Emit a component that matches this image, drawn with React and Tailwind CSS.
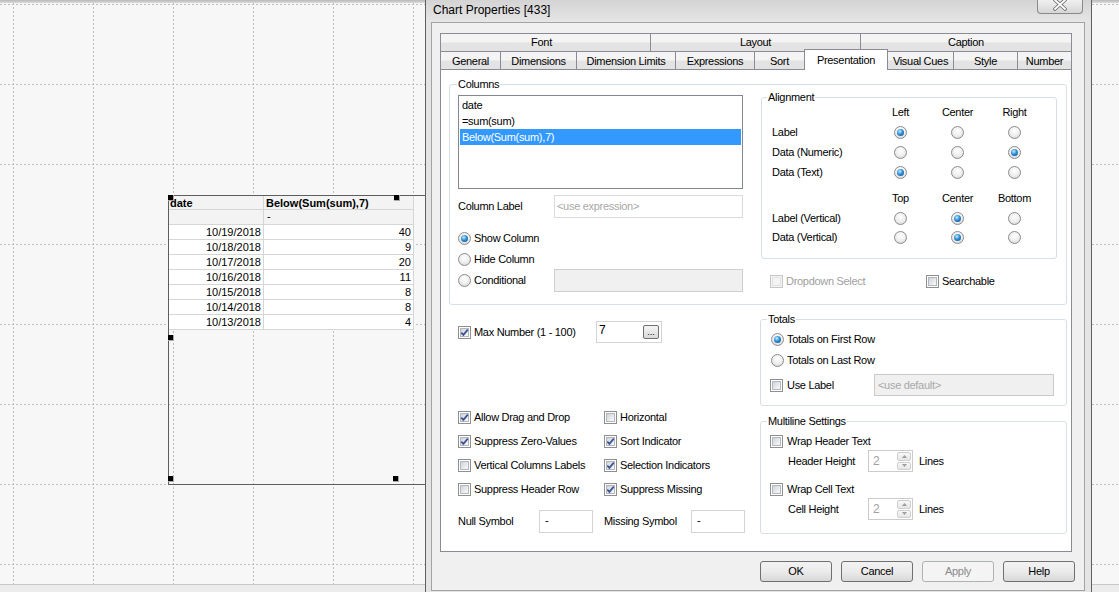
import React from "react";

function Check({ checked = false, disabled = false }) {
  return (
    <span
      className={`relative inline-flex h-[13px] w-[13px] shrink-0 items-center justify-center border ${
        disabled ? "border-[#c6c6c6] bg-[#f4f4f4]" : "border-[#8e8f8f] bg-white"
      }`}
    >
      <span
        className={`h-[9px] w-[9px] border ${
          disabled
            ? "border-[#e2e2e2] bg-[#f4f4f4]"
            : "border-[#b3b7bd] bg-linear-to-br from-[#cfd3d9] to-[#fafafa]"
        }`}
      />
      {checked && (
        <svg className="absolute left-0 top-0" width="11" height="11" viewBox="0 0 11 11">
          <path d="M2.3 5.6 L4.4 7.9 L8.8 2.6" fill="none" stroke="#3b5393" strokeWidth="1.7" />
        </svg>
      )}
    </span>
  );
}

function Radio({ checked = false }) {
  return (
    <span className="inline-flex h-[13px] w-[13px] shrink-0 items-center justify-center rounded-full border border-[#8c8c8c] bg-[radial-gradient(circle_at_50%_35%,#ffffff_0%,#ededed_55%,#cdcdcd_100%)]">
      {checked && (
        <span className="h-[7px] w-[7px] rounded-full bg-[radial-gradient(circle_at_40%_35%,#c8eeff_0%,#2e8fd6_45%,#0a4784_100%)]" />
      )}
    </span>
  );
}

function CheckItem({ checked, disabled, label, gap = "gap-[3px]" }) {
  return (
    <div className={`flex items-center ${gap}`}>
      <Check checked={checked} disabled={disabled} />
      <span className={disabled ? "text-[#a0a0a0]" : ""}>{label}</span>
    </div>
  );
}

function RadioItem({ checked, label }) {
  return (
    <div className="flex h-[16px] items-center gap-[3px]">
      <Radio checked={checked} />
      <span>{label}</span>
    </div>
  );
}

function Group({ label, legendLeft, className = "", children }) {
  return (
    <div className={`relative rounded-[3px] border border-[#d5dfe5] ${className}`}>
      <span className={`absolute -top-[8px] bg-white px-[1px] leading-[14px] ${legendLeft}`}>{label}</span>
      {children}
    </div>
  );
}

function Spinner() {
  return (
    <div className="flex h-[22px] w-[45px] border border-[#cbcbcb] bg-white">
      <span className="flex flex-1 items-center pl-[4px] text-[12px] text-[#a0a0a0]">2</span>
      <div className="flex w-[16px] flex-col gap-[1px] p-[1px]">
        <span className="flex flex-1 items-center justify-center rounded-[2px] border border-[#cfcfcf] bg-linear-to-b from-[#f8f8f8] to-[#e6e6e6]">
          <svg width="5" height="3" viewBox="0 0 5 3">
            <path d="M0 3 L2.5 0 L5 3Z" fill="#9c9c9c" />
          </svg>
        </span>
        <span className="flex flex-1 items-center justify-center rounded-[2px] border border-[#cfcfcf] bg-linear-to-b from-[#f8f8f8] to-[#e6e6e6]">
          <svg width="5" height="3" viewBox="0 0 5 3">
            <path d="M0 0 L2.5 3 L5 0Z" fill="#9c9c9c" />
          </svg>
        </span>
      </div>
    </div>
  );
}

function AlignHeader({ a, b, c }) {
  return (
    <div className="flex h-[20px] items-center">
      <span className="w-[100px]" />
      <span className="w-[57px] text-center">{a}</span>
      <span className="w-[57px] text-center">{b}</span>
      <span className="w-[57px] text-center">{c}</span>
    </div>
  );
}

function AlignRow({ label, sel, h = "h-[20px]" }) {
  return (
    <div className={`flex items-center ${h}`}>
      <span className="w-[100px]">{label}</span>
      {[0, 1, 2].map((i) => (
        <span key={i} className="flex w-[57px] justify-center">
          <Radio checked={sel === i} />
        </span>
      ))}
    </div>
  );
}

function Btn({ label, disabled }) {
  return (
    <div
      className={`flex h-[21px] w-[72px] items-center justify-center rounded-[3px] border ${
        disabled
          ? "border-[#adb2b5] bg-[#f4f4f4] text-[#8a8a8a]"
          : "border-[#707070] bg-linear-to-b from-[#f2f2f2] via-[#ebebeb] to-[#d8d8d8] text-black"
      }`}
    >
      {label}
    </div>
  );
}

const rows = [
  ["10/19/2018", "40"],
  ["10/18/2018", "9"],
  ["10/17/2018", "20"],
  ["10/16/2018", "11"],
  ["10/15/2018", "8"],
  ["10/14/2018", "8"],
  ["10/13/2018", "4"],
];

const vx = [13, 93, 173, 253, 333, 413];
const hy = [1, 81, 161, 241, 321, 401, 481, 561];

function Handle({ pos }) {
  return <span className={`absolute h-[6px] w-[6px] border-b border-r border-[#a8a8a8] bg-black ${pos}`} />;
}

export default function App() {
  return (
    <div className="relative flex h-[592px] w-[1119px] flex-col overflow-hidden bg-[#f7f7f7] font-['Liberation_Sans',Arial,sans-serif] text-black">
      <div className="h-[3px] bg-linear-to-b from-[#b9b9b9] to-[#d9d9d9]" />
      <div className="relative h-[581px]">
        <svg className="absolute left-0 top-0" width="1119" height="581">
          {vx.map((x) => (
            <line key={x} x1={x + 0.5} y1="0" x2={x + 0.5} y2="581" stroke="#bdbdbd" strokeDasharray="2 2" />
          ))}
          {hy.map((y) => (
            <line key={y} x1="0" y1={y + 0.5} x2="1119" y2={y + 0.5} stroke="#bdbdbd" strokeDasharray="2 2" />
          ))}
        </svg>

        {/* table object on the sheet */}
        <div className="absolute left-[168px] top-[192px] h-[290px] w-[260px] border-b border-l border-t border-[#5e5e5e] text-[11px]">
          <div className="grid w-[245px] grid-cols-[95px_150px]">
            <div className="h-[14px] border-b border-r border-[#d6d6d6] bg-[#f3f3f3] pl-[1px] font-bold leading-[14px]">date</div>
            <div className="h-[14px] border-b border-r border-[#d6d6d6] bg-[#f3f3f3] pl-[2px] font-bold leading-[14px]">Below(Sum(sum),7)</div>
            <div className="h-[15px] border-b border-r border-[#d6d6d6] bg-[#f3f3f3]" />
            <div className="h-[15px] border-b border-r border-[#d6d6d6] bg-[#f3f3f3] pl-[3px] leading-[13px]">-</div>
            {rows.map(([d, v]) => (
              <React.Fragment key={d}>
                <div className="h-[15px] border-b border-r border-[#d6d6d6] bg-white pr-[2px] text-right leading-[14px]">{d}</div>
                <div className="h-[15px] border-b border-r border-[#d6d6d6] bg-white pr-[2px] text-right leading-[14px]">{v}</div>
              </React.Fragment>
            ))}
          </div>
          <Handle pos="-left-[1px] -top-[1px]" />
          <Handle pos="left-[225px] -top-[1px]" />
          <Handle pos="-left-[1px] top-[139px]" />
          <Handle pos="-left-[1px] top-[280px]" />
          <Handle pos="left-[224px] top-[280px]" />
        </div>
      </div>
      <div className="h-[8px] border-t border-[#c9c9c9] bg-[#ececec]" />

      {/* dialog window */}
      <div className="absolute left-[425px] top-0 h-[596px] w-[667px] border-x border-[#5f5f5f] bg-[#e4e4e4] text-[11px] tracking-[-0.3px]">
        <div className="relative h-[22px] bg-linear-to-b from-[#d4d4d4] to-[#e6e6e6] pl-[7px] pt-[2px]">
          <span className="text-[12px] leading-[14px] tracking-normal">Chart Properties [433]</span>
          <div className="absolute left-[611px] top-0 flex h-[14px] w-[46px] items-start justify-center rounded-b-[4px] border border-t-0 border-[#8a8a8a] bg-linear-to-b from-[#f0f0f0] to-[#d6d6d6]">
            <svg width="16" height="11" viewBox="0 0 16 11">
              <path d="M3 0 L13 9 M13 0 L3 9" stroke="#6b6b6b" strokeWidth="3.6" strokeLinecap="round" />
              <path d="M3 0 L13 9 M13 0 L3 9" stroke="#ffffff" strokeWidth="1.8" strokeLinecap="round" />
            </svg>
          </div>
        </div>

        <div className="ml-[5px] flex h-[569px] w-[654px] flex-col border border-[#a3a3a3] bg-[#f0f0f0] pl-[8px] pt-[10px]">
          {/* tabs row 1 */}
          <div className="flex h-[18px] w-[632px]">
            <div className="h-[18px] w-[210px] border-l border-t border-[#898c95] bg-linear-to-b from-[#f4f4f4] from-45% to-[#e3e3e3] to-55% pr-[8px] text-center leading-[17px]">Font</div>
            <div className="h-[18px] w-[210px] border-l border-t border-[#898c95] bg-linear-to-b from-[#f4f4f4] from-45% to-[#e3e3e3] to-55% text-center leading-[17px]">Layout</div>
            <div className="h-[18px] w-[212px] border-x border-t border-[#898c95] bg-linear-to-b from-[#f4f4f4] from-45% to-[#e3e3e3] to-55% text-center leading-[17px]">Caption</div>
          </div>
          {/* tabs row 2 */}
          <div className="flex h-[18px] w-[632px]">
            <div className="h-[18px] w-[60px] border-l border-t border-[#898c95] bg-linear-to-b from-[#f4f4f4] from-45% to-[#e3e3e3] to-55% text-center leading-[18px]">General</div>
            <div className="h-[18px] w-[76px] border-l border-t border-[#898c95] bg-linear-to-b from-[#f4f4f4] from-45% to-[#e3e3e3] to-55% text-center leading-[18px]">Dimensions</div>
            <div className="h-[18px] w-[99px] border-l border-t border-[#898c95] bg-linear-to-b from-[#f4f4f4] from-45% to-[#e3e3e3] to-55% text-center leading-[18px]">Dimension Limits</div>
            <div className="h-[18px] w-[79px] border-l border-t border-[#898c95] bg-linear-to-b from-[#f4f4f4] from-45% to-[#e3e3e3] to-55% text-center leading-[18px]">Expressions</div>
            <div className="h-[18px] w-[50px] border-l border-t border-[#898c95] bg-linear-to-b from-[#f4f4f4] from-45% to-[#e3e3e3] to-55% text-center leading-[18px]">Sort</div>
            <div className="relative z-10 -mb-[1px] -mt-[2px] h-[21px] w-[84px] border-x border-t border-[#898c95] bg-white pt-[2px] text-center leading-[16px]">Presentation</div>
            <div className="h-[18px] w-[65px] border-t border-[#898c95] bg-linear-to-b from-[#f4f4f4] from-45% to-[#e3e3e3] to-55% text-center leading-[18px]">Visual Cues</div>
            <div className="h-[18px] w-[64px] border-l border-t border-[#898c95] bg-linear-to-b from-[#f4f4f4] from-45% to-[#e3e3e3] to-55% text-center leading-[18px]">Style</div>
            <div className="h-[18px] w-[55px] border-x border-t border-[#898c95] bg-linear-to-b from-[#f4f4f4] from-45% to-[#e3e3e3] to-55% text-center leading-[18px]">Number</div>
          </div>

          {/* panel */}
          <div className="flex h-[483px] w-[632px] flex-col border border-[#898c95] bg-white">
            {/* Columns group */}
            <Group label="Columns" legendLeft="left-[7px]" className="ml-[8px] mt-[14px] flex h-[221px] w-[618px] pl-[8px] pt-[10px]">
              <div className="flex w-[285px] flex-col">
                <div className="h-[94px] border border-[#828790] bg-white px-[1px] pt-[1px]">
                  <div className="h-[16px] pl-[2px] leading-[16px]">date</div>
                  <div className="h-[16px] pl-[2px] leading-[16px]">=sum(sum)</div>
                  <div className="h-[16px] bg-[#3399ff] pl-[2px] leading-[16px] text-white">Below(Sum(sum),7)</div>
                </div>
                <div className="mt-[6px] flex h-[23px] items-center">
                  <span className="w-[96px]">Column Label</span>
                  <div className="flex h-[23px] w-[189px] items-center border border-[#d9dbdf] bg-white pl-[2px] text-[#a8a8a8]">{"<use expression>"}</div>
                </div>
                <div className="mt-[12px]">
                  <RadioItem checked label="Show Column" />
                </div>
                <div className="mt-[5px]">
                  <RadioItem label="Hide Column" />
                </div>
                <div className="mt-[2px] flex h-[23px] items-center">
                  <div className="w-[96px]">
                    <RadioItem label="Conditional" />
                  </div>
                  <div className="h-[23px] w-[189px] border border-[#cfcfcf] bg-[#f0f0f0]" />
                </div>
              </div>

              <div className="ml-[18px] flex w-[296px] flex-col">
                <Group label="Alignment" legendLeft="left-[5px]" className="mt-[2px] h-[162px] w-[296px] pl-[10px] pt-[4px]">
                  <AlignHeader a="Left" b="Center" c="Right" />
                  <AlignRow label="Label" sel={0} />
                  <AlignRow label="Data (Numeric)" sel={2} />
                  <AlignRow label="Data (Text)" sel={0} />
                  <div className="mt-[6px]">
                    <AlignHeader a="Top" b="Center" c="Bottom" />
                  </div>
                  <AlignRow label="Label (Vertical)" sel={1} />
                  <AlignRow label="Data (Vertical)" sel={1} h="h-[19px]" />
                </Group>
                <div className="mt-[14px] flex h-[16px] items-center pl-[9px]">
                  <div className="w-[156px]">
                    <CheckItem disabled label="Dropdown Select" gap="gap-[3px]" />
                  </div>
                  <CheckItem label="Searchable" gap="gap-[3px]" />
                </div>
              </div>
            </Group>

            {/* lower section */}
            <div className="mt-[14px] flex">
              <div className="ml-[17px] flex w-[302px] flex-col">
                <div className="mt-[2px] flex h-[22px] items-center">
                  <div className="w-[138px]">
                    <CheckItem checked label="Max Number (1 - 100)" />
                  </div>
                  <div className="flex h-[22px] w-[66px] justify-between border border-[#d2d4d8] bg-white">
                    <span className="pl-[2px] pt-[1px] text-[12px] leading-[14px]">7</span>
                    <span className="mr-[2px] mt-[3px] flex h-[14px] w-[16px] items-end justify-center rounded-[2px] border border-[#707070] bg-linear-to-b from-[#f4f4f4] to-[#d9d9d9] pb-[2px] text-[9px] leading-[8px] tracking-normal">...</span>
                  </div>
                </div>
                <div className="mt-[62px] grid auto-rows-[24px] grid-cols-[146px_1fr] items-center">
                  <CheckItem checked label="Allow Drag and Drop" />
                  <CheckItem label="Horizontal" />
                  <CheckItem checked label="Suppress Zero-Values" />
                  <CheckItem checked label="Sort Indicator" />
                  <CheckItem label="Vertical Columns Labels" />
                  <CheckItem checked label="Selection Indicators" />
                  <CheckItem label="Suppress Header Row" />
                  <CheckItem checked label="Suppress Missing" />
                </div>
                <div className="mt-[9px] flex h-[23px] items-center">
                  <span className="w-[81px]">Null Symbol</span>
                  <div className="h-[23px] w-[54px] border border-[#d2d4d8] bg-white pl-[5px] pt-[2px] leading-[14px]">-</div>
                  <span className="ml-[11px] w-[87px]">Missing Symbol</span>
                  <div className="h-[23px] w-[54px] border border-[#d2d4d8] bg-white pl-[5px] pt-[2px] leading-[14px]">-</div>
                </div>
              </div>

              <div className="flex w-[307px] flex-col">
                <Group label="Totals" legendLeft="left-[6px]" className="h-[87px] w-[307px] pl-[10px] pt-[11px]">
                  <RadioItem checked label="Totals on First Row" />
                  <div className="mt-[5px]">
                    <RadioItem label="Totals on Last Row" />
                  </div>
                  <div className="-ml-[1px] mt-[6px] flex h-[22px] items-center">
                    <div className="w-[104px]">
                      <CheckItem label="Use Label" gap="gap-[4px]" />
                    </div>
                    <div className="flex h-[22px] w-[180px] items-center border border-[#c9c9c9] bg-[#f0f0f0] pl-[3px] text-[#a8a8a8]">{"<use default>"}</div>
                  </div>
                </Group>
                <Group label="Multiline Settings" legendLeft="left-[6px]" className="mt-[15px] h-[113px] w-[307px] pl-[9px] pt-[11px]">
                  <div className="flex h-[16px] items-center">
                    <CheckItem label="Wrap Header Text" gap="gap-[4px]" />
                  </div>
                  <div className="mt-[1px] flex h-[22px] items-center pl-[18px]">
                    <span className="w-[80px]">Header Height</span>
                    <Spinner />
                    <span className="ml-[6px]">Lines</span>
                  </div>
                  <div className="mt-[9px] flex h-[16px] items-center">
                    <CheckItem label="Wrap Cell Text" gap="gap-[4px]" />
                  </div>
                  <div className="mt-[1px] flex h-[22px] items-center pl-[18px]">
                    <span className="w-[80px]">Cell Height</span>
                    <Spinner />
                    <span className="ml-[6px]">Lines</span>
                  </div>
                </Group>
              </div>
            </div>
          </div>

          {/* buttons */}
          <div className="mt-[9px] flex justify-end gap-[9px] pr-[9px]">
            <Btn label="OK" />
            <Btn label="Cancel" />
            <Btn label="Apply" disabled />
            <Btn label="Help" />
          </div>
        </div>
      </div>
    </div>
  );
}
